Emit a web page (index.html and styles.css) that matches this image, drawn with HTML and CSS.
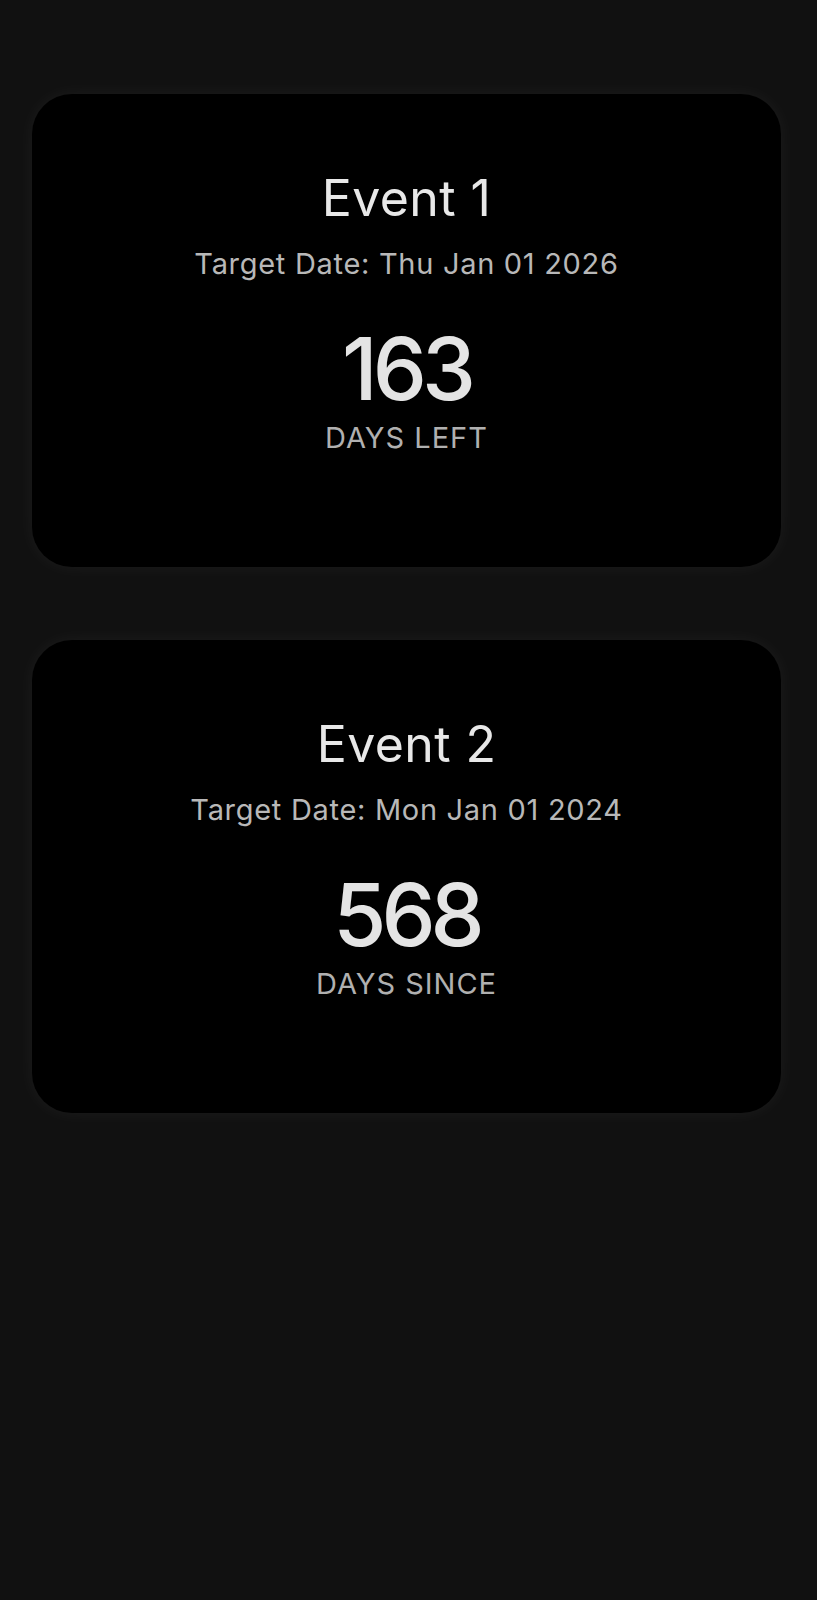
FILE: index.html
```html
<!DOCTYPE html>
<html lang="en">
<head>
<meta charset="utf-8">
<title>Countdown</title>
<link rel="stylesheet" href="styles.css">
</head>
<body>
<main class="list">
  <section class="card">
    <h2 class="title">Event 1</h2>
    <p class="date">Target Date: Thu Jan 01 2026</p>
    <div class="count">163</div>
    <div class="label">DAYS LEFT</div>
  </section>
  <section class="card">
    <h2 class="title">Event 2</h2>
    <p class="date">Target Date: Mon Jan 01 2024</p>
    <div class="count">568</div>
    <div class="label">DAYS SINCE</div>
  </section>
</main>
</body>
</html>
```
FILE: styles.css
```css
html, body {
  margin: 0;
  padding: 0;
  background: #111111;
}
body {
  font-family: Inter, "Open Sans", sans-serif;
  min-height: 1600px;
}
.list {
  display: flex;
  flex-direction: column;
  gap: 73px;
  padding: 94px 36px 0 32px;
}
.card {
  background: #000000;
  border-radius: 40px;
  box-shadow: 0 0 18px rgba(255, 255, 255, 0.05);
  text-align: center;
  padding: 74px 0 110px;
  height: 473px;
  box-sizing: border-box;
}
.title {
  margin: 0;
  font-size: 50px;
  line-height: 60px;
  font-weight: 400;
  letter-spacing: 0.4px;
  color: #e8e8e8;
}
.date {
  margin: 18px 0 0;
  font-size: 29px;
  line-height: 36px;
  letter-spacing: 0.7px;
  color: #b8b8b8;
}
.count {
  margin-top: 37px;
  font-size: 86px;
  line-height: 100px;
  font-weight: 500;
  letter-spacing: -5px;
  color: #e4e4e4;
}
.label {
  margin-top: 1px;
  font-size: 29px;
  line-height: 36px;
  letter-spacing: 1px;
  color: #b0b0b0;
}
```
